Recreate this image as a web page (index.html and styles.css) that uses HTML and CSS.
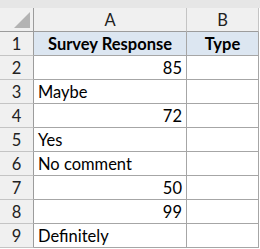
FILE: index.html
```html
<!DOCTYPE html>
<html>
<head>
<meta charset="utf-8">
<link rel="stylesheet" href="styles.css">
</head>
<body>
<div class="topstrip"></div>
<div class="sheet">
  <div class="corner"><div class="tri"></div></div>
  <div class="colhead">A</div>
  <div class="colhead">B</div>

  <div class="rowhead">1</div>
  <div class="cell hdr">Survey Response</div>
  <div class="cell hdr">Type</div>

  <div class="rowhead">2</div>
  <div class="cell num">85</div>
  <div class="cell"></div>

  <div class="rowhead">3</div>
  <div class="cell">Maybe</div>
  <div class="cell"></div>

  <div class="rowhead">4</div>
  <div class="cell num">72</div>
  <div class="cell"></div>

  <div class="rowhead">5</div>
  <div class="cell">Yes</div>
  <div class="cell"></div>

  <div class="rowhead">6</div>
  <div class="cell">No comment</div>
  <div class="cell"></div>

  <div class="rowhead">7</div>
  <div class="cell num">50</div>
  <div class="cell"></div>

  <div class="rowhead">8</div>
  <div class="cell num">99</div>
  <div class="cell"></div>

  <div class="rowhead">9</div>
  <div class="cell">Definitely</div>
  <div class="cell"></div>
</div>
</body>
</html>
```

FILE: styles.css
```css
html, body {
  margin: 0;
  padding: 0;
  background: #ffffff;
}
body {
  font-family: Lato, "Liberation Sans", sans-serif;
  font-size: 16.5px;
  color: #000;
  width: 260px;
  height: 249px;
  overflow: hidden;
}
.topstrip {
  height: 8px;
  background: #e6e6e6;
}
.sheet {
  display: grid;
  grid-template-columns: 34px 153px 72px;
  grid-template-rows: 24px repeat(9, 24px);
  background: #fff;
}
.corner {
  background: #f0f0f0;
  border-right: 1px solid #9c9c9c;
  border-bottom: 1px solid #9c9c9c;
  position: relative;
}
.tri {
  position: absolute;
  right: 3px;
  bottom: 3px;
  width: 0;
  height: 0;
  border-left: 16px solid transparent;
  border-bottom: 16px solid #b3b3b3;
}
.colhead {
  background: #f0f0f0;
  border-right: 1px solid #c4c4c4;
  border-bottom: 1px solid #9c9c9c;
  display: flex;
  align-items: center;
  justify-content: center;
  color: #222;
}
.rowhead {
  background: #f0f0f0;
  border-right: 1px solid #9c9c9c;
  border-bottom: 1px solid #c4c4c4;
  display: flex;
  align-items: center;
  justify-content: center;
  color: #222;
}
.cell {
  border-right: 1px solid #a6a6a6;
  border-bottom: 1px solid #a6a6a6;
  display: flex;
  align-items: center;
  padding: 1px 4px 0;
  white-space: nowrap;
  overflow: hidden;
}
.num {
  justify-content: flex-end;
}
.hdr {
  background: #dce6f1;
  font-weight: bold;
  justify-content: center;
}
```
